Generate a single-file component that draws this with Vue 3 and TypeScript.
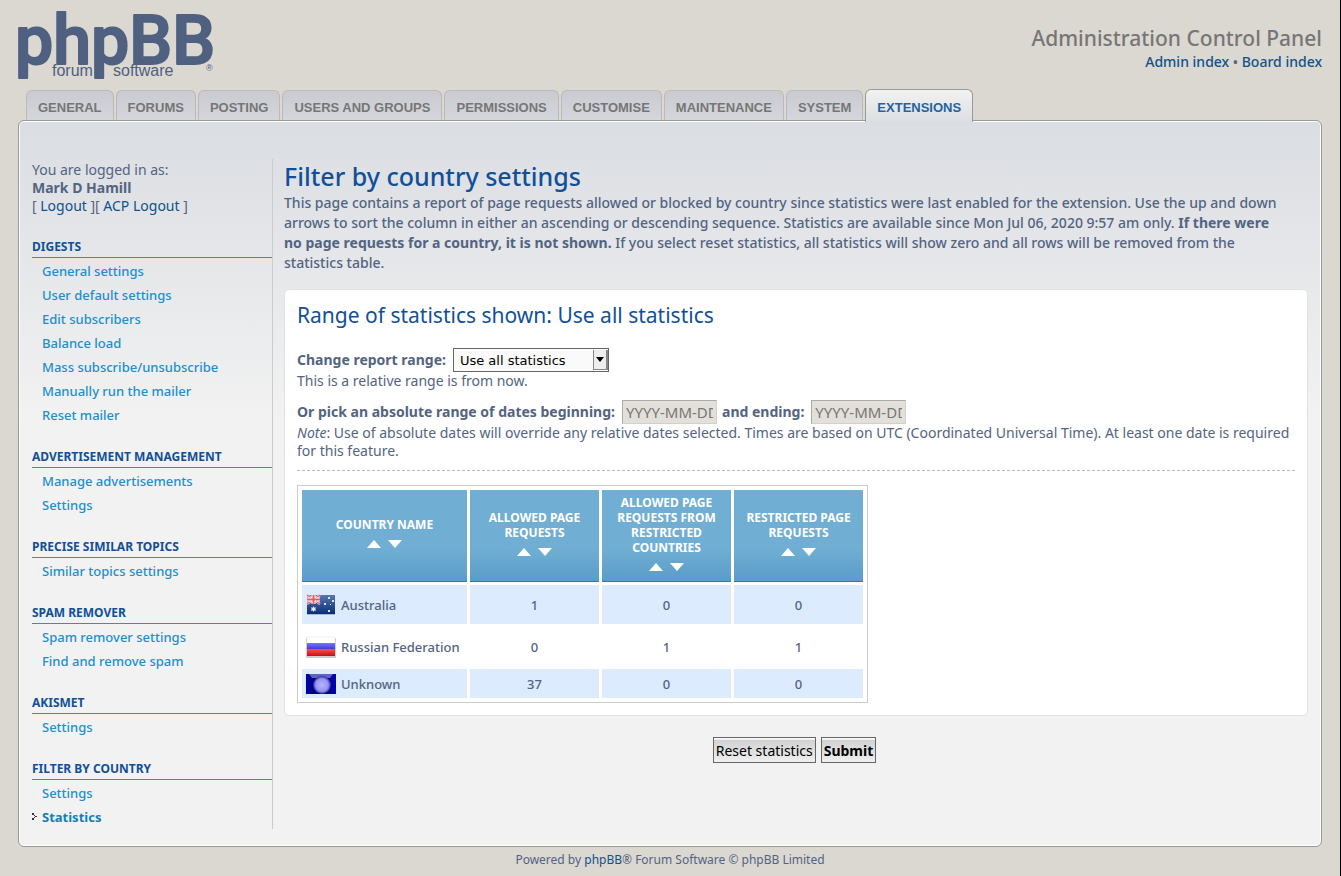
<script setup lang="ts">
import { ref } from 'vue'

interface MenuGroup {
  title: string
  items: string[]
}

interface CountryRow {
  name: string
  flag: 'au' | 'ru' | 'unknown'
  counts: number[]
}

const tabs: string[] = [
  'General', 'Forums', 'Posting', 'Users and Groups', 'Permissions',
  'Customise', 'Maintenance', 'System', 'Extensions',
]
const activeTab = 'Extensions'

const groups: MenuGroup[] = [
  {
    title: 'Digests',
    items: [
      'General settings', 'User default settings', 'Edit subscribers', 'Balance load',
      'Mass subscribe/unsubscribe', 'Manually run the mailer', 'Reset mailer',
    ],
  },
  { title: 'Advertisement management', items: ['Manage advertisements', 'Settings'] },
  { title: 'Precise Similar Topics', items: ['Similar topics settings'] },
  { title: 'Spam remover', items: ['Spam remover settings', 'Find and remove spam'] },
  { title: 'Akismet', items: ['Settings'] },
  { title: 'Filter by country', items: ['Settings', 'Statistics'] },
]

const columns: string[] = [
  'Country name',
  'Allowed page requests',
  'Allowed page requests from restricted countries',
  'Restricted page requests',
]

const rows: CountryRow[] = [
  { name: 'Australia', flag: 'au', counts: [1, 0, 0] },
  { name: 'Russian Federation', flag: 'ru', counts: [0, 1, 1] },
  { name: 'Unknown', flag: 'unknown', counts: [37, 0, 0] },
]

const range = ref('all')
const begin = ref('')
const end = ref('')
</script>

<template>
  <div class="page">
    <header class="header">
      <a href="#" class="logo" aria-label="phpBB forum software">
        <svg width="200" height="70" viewBox="0 0 200 70">
          <text class="logo-main" x="-3" y="53">phpBB</text>
          <text class="logo-sub" x="34" y="65">forum</text>
          <text class="logo-sub" x="95" y="65">software</text>
          <text class="logo-reg" x="188" y="60">®</text>
        </svg>
      </a>
      <div class="header-info">
        <h1>Administration Control Panel</h1>
        <p><a href="#">Admin index</a> • <a href="#">Board index</a></p>
      </div>
    </header>

    <nav class="tabs">
      <a v-for="tab in tabs" :key="tab" href="#" class="tab" :class="{ active: tab === activeTab }">{{ tab }}</a>
    </nav>

    <div class="panel">
      <aside class="menu">
        <div class="user">
          <div>You are logged in as:</div>
          <strong>Mark D Hamill</strong>
          <div>[ <a href="#">Logout</a> ][ <a href="#">ACP Logout</a> ]</div>
        </div>
        <section v-for="group in groups" :key="group.title" class="group">
          <h2>{{ group.title }}</h2>
          <ul>
            <li v-for="item in group.items" :key="item" :class="{ current: item === 'Statistics' }">
              <svg v-if="item === 'Statistics'" class="marker" width="5" height="7" viewBox="0 0 5 7">
                <path d="M0 0h2v2H0zM2 2h1v1H2zM3 3h2v1H3zM2 4h1v1H2zM0 5h2v2H0z" fill="#333" />
              </svg>
              <a href="#">{{ item }}</a>
            </li>
          </ul>
        </section>
      </aside>

      <main class="main">
        <h1>Filter by country settings</h1>
        <p class="intro">
          This page contains a report of page requests allowed or blocked by country since statistics were last
          enabled for the extension. Use the up and down arrows to sort the column in either an ascending or
          descending sequence. Statistics are available since Mon Jul 06, 2020 9:57 am only.
          <strong>If there were no page requests for a country, it is not shown.</strong>
          If you select reset statistics, all statistics will show zero and all rows will be removed from the
          statistics table.
        </p>

        <form @submit.prevent>
          <div class="box">
            <h2>Range of statistics shown: Use all statistics</h2>
            <div class="field">
              <label for="range">Change report range:</label>
              <span class="select-wrap">
                <select id="range" v-model="range">
                  <option value="all">Use all statistics</option>
                </select>
                <span class="select-arrow">
                  <svg width="8" height="5" viewBox="0 0 8 5"><path d="M0 0h8L4 5z" fill="#000" /></svg>
                </span>
              </span>
            </div>
            <p class="hint">This is a relative range is from now.</p>
            <div class="field dates">
              <label for="begin">Or pick an absolute range of dates beginning:</label>
              <input id="begin" v-model="begin" type="text" placeholder="YYYY-MM-DD" />
              <label for="end" class="ending">and ending:</label>
              <input id="end" v-model="end" type="text" placeholder="YYYY-MM-DD" />
            </div>
            <p class="hint">
              <em>Note</em>: Use of absolute dates will override any relative dates selected. Times are based on UTC
              (Coordinated Universal Time). At least one date is required for this feature.
            </p>
            <hr />
            <table>
              <colgroup>
                <col class="col-name" />
                <col class="col-count" />
                <col class="col-count" />
                <col class="col-count" />
              </colgroup>
              <thead>
                <tr>
                  <th v-for="column in columns" :key="column" scope="col">
                    {{ column }}
                    <span class="sort">
                      <a href="#" aria-label="Sort ascending">
                        <svg width="14" height="8" viewBox="0 0 14 8"><path d="M0 8h14L7 0z" fill="#fff" /></svg>
                      </a>
                      <a href="#" aria-label="Sort descending">
                        <svg width="14" height="8" viewBox="0 0 14 8"><path d="M0 0h14L7 8z" fill="#fff" /></svg>
                      </a>
                    </span>
                  </th>
                </tr>
              </thead>
              <tbody>
                <tr v-for="row in rows" :key="row.name" :class="row.flag">
                  <td>
                    <div class="country">
                      <svg v-if="row.flag === 'au'" width="30" height="22" viewBox="0 0 30 22">
                        <defs>
                          <linearGradient id="auBlue" x2="0" y2="1">
                            <stop offset="0" stop-color="#5577b2" />
                            <stop offset="1" stop-color="#092e78" />
                          </linearGradient>
                        </defs>
                        <rect x="1" y="2" width="28" height="19" fill="#8b98ab" opacity=".6" />
                        <rect x="1" y="1" width="28" height="19" fill="url(#auBlue)" />
                        <path d="M1 1l13 9M14 1L1 10" stroke="#eec5cd" stroke-width="2.4" />
                        <path d="M1 1l13 9M14 1L1 10" stroke="#dc5364" stroke-width="1" />
                        <path d="M7.5 1v9M1 5.5h13" stroke="#fff" stroke-width="4" />
                        <path d="M7.5 1v9M1 5.5h13" stroke="#e65c62" stroke-width="2" />
                        <path d="M7.5 12l.8 1.7 1.9-.4-.9 1.7.9 1.7-1.9-.3-.8 1.6-.8-1.6-1.9.3.9-1.7-.9-1.7 1.9.4z" fill="#dfe9fa" />
                        <g fill="#dbe6f7">
                          <rect x="22" y="3" width="2" height="2" />
                          <rect x="18" y="9" width="2" height="2" />
                          <rect x="26" y="6" width="2" height="2" />
                          <rect x="24" y="10" width="1" height="1" />
                          <rect x="22" y="16" width="2" height="2" />
                        </g>
                      </svg>
                      <svg v-else-if="row.flag === 'ru'" width="30" height="22" viewBox="0 0 30 22">
                        <defs>
                          <linearGradient id="ruRed" x2="0" y2="1">
                            <stop offset="0" stop-color="#ff5148" />
                            <stop offset="1" stop-color="#c5110c" />
                          </linearGradient>
                          <linearGradient id="ruBlue" x2="0" y2="1">
                            <stop offset="0" stop-color="#7775ff" />
                            <stop offset="1" stop-color="#3830d8" />
                          </linearGradient>
                        </defs>
                        <rect x="0" y="2" width="30" height="20" rx="1" fill="#b5b5b5" opacity=".7" />
                        <rect x="1" y="1" width="28" height="19" fill="#fff" stroke="#ddd" stroke-width=".5" />
                        <rect x="1" y="7" width="28" height="7" fill="url(#ruBlue)" />
                        <rect x="1" y="13" width="28" height="7" fill="url(#ruRed)" />
                      </svg>
                      <svg v-else width="30" height="20" viewBox="0 0 30 20">
                        <defs>
                          <radialGradient id="globe">
                            <stop offset="0" stop-color="#b5b5ff" />
                            <stop offset=".7" stop-color="#9494ef" />
                            <stop offset="1" stop-color="#2020b0" />
                          </radialGradient>
                          <linearGradient id="night">
                            <stop offset="0" stop-color="#0000b8" />
                            <stop offset=".25" stop-color="#000078" />
                            <stop offset=".7" stop-color="#000078" />
                            <stop offset="1" stop-color="#0000b8" />
                          </linearGradient>
                        </defs>
                        <rect width="30" height="20" fill="url(#night)" />
                        <path d="M3 0h24l-3 4H6z" fill="#6262bd" />
                        <circle cx="16" cy="11" r="9" fill="url(#globe)" />
                      </svg>
                      <span>{{ row.name }}</span>
                    </div>
                  </td>
                  <td v-for="(count, i) in row.counts" :key="i" class="count">{{ count }}</td>
                </tr>
              </tbody>
            </table>
          </div>
          <div class="actions">
            <button type="button">Reset statistics</button>
            <button type="submit" class="primary">Submit</button>
          </div>
        </form>
      </main>
    </div>

    <footer class="footer">Powered by <a href="#">phpBB</a>® Forum Software © phpBB Limited</footer>
  </div>
</template>

<style>
body {
  background: #dbd7d1;
}
</style>

<style scoped>
* {
  box-sizing: border-box;
}

h1,
h2,
p,
ul {
  margin: 0;
  padding: 0;
  font-weight: 400;
}

a {
  color: #105289;
  text-decoration: none;
}

.page {
  min-height: 100vh;
  padding: 0 18px;
  border-right: 1px solid #000;
  color: #536482;
  font: 14px/18px "Noto Sans", "Open Sans", sans-serif;
}

.header {
  display: flex;
  justify-content: space-between;
  height: 89px;
  padding-top: 11px;
}

.logo svg {
  display: block;
  overflow: visible;
  fill: #4f6080;
}

.logo-main {
  font: 500 68px Roboto, sans-serif;
  stroke: #4f6080;
  stroke-width: 2px;
  stroke-linejoin: round;
}

.logo-sub {
  font: 16px "Liberation Sans", sans-serif;
}

.logo-reg {
  font: 9px "Liberation Sans", sans-serif;
}

.header-info {
  padding-top: 12px;
  text-align: right;
}

.header-info h1 {
  color: #767676;
  font: 500 21px/30px "Noto Sans", "Open Sans", sans-serif;
}

.header-info p {
  font-weight: 500;
}

.tabs {
  display: flex;
  align-items: flex-end;
  gap: 2px;
  height: 32px;
  padding-left: 8px;
}

.tab {
  height: 30px;
  margin-bottom: 1px;
  padding: 0 11px;
  border: 1px solid #bbb9b9;
  border-bottom: 0;
  border-radius: 6px 6px 0 0;
  background: linear-gradient(#c9cbd0, #d4d6db);
  color: #767676;
  font: bold 13px/34px "Liberation Sans", Arial, sans-serif;
  text-transform: uppercase;
}

.tab.active {
  z-index: 1;
  height: 33px;
  margin-bottom: -1px;
  border-color: #999;
  background: linear-gradient(#f2f2f2, #dcdee2);
  color: #23649f;
  line-height: 36px;
}

.panel {
  display: flex;
  margin-top: -1px;
  padding: 38px 12px 17px;
  border: 1px solid #999;
  border-radius: 6px;
  background: linear-gradient(#dadde2, #f2f2f2 300px);
  box-shadow: inset 0 0 0 1px #fff;
}

.menu {
  flex: 0 0 241px;
  margin-left: 1px;
  border-right: 1px solid #ccc;
}

.user {
  padding: 2px 0 21px;
}

.user strong {
  display: block;
}

.group {
  padding-bottom: 19px;
}

.group:last-child {
  padding-bottom: 0;
}

.group h2 {
  padding: 2px 0 1px;
  border-bottom: 1px solid #3b8bbd;
  color: #115098;
  font: bold 12px/18px "Noto Sans", sans-serif;
  text-transform: uppercase;
}

.group ul {
  padding-top: 1px;
  list-style: none;
}

.group li {
  position: relative;
  padding-left: 10px;
  font-size: 13px;
  font-weight: 500;
  line-height: 24px;
}

.group li a {
  color: #1d8fcb;
}

.group .current a {
  color: #1180b5;
  font-weight: bold;
}

.marker {
  position: absolute;
  top: 8px;
  left: 0;
}

.main {
  flex: 1;
  min-width: 0;
  margin-left: 11px;
}

.main h1 {
  color: #115098;
  font: 500 25px/34px "Noto Sans", "Open Sans", sans-serif;
}

.intro {
  padding-right: 20px;
  font-weight: 500;
  line-height: 20px;
}

.box {
  margin: 16px 1px 0 0;
  padding: 12px;
  border: 1px solid #e0e2e5;
  border-radius: 5px;
  background: #fff;
}

.box h2 {
  margin-bottom: 20px;
  color: #115098;
  font: 21px/26px "Noto Sans", "Open Sans", sans-serif;
}

.field {
  display: flex;
  align-items: center;
  height: 24px;
}

.field label {
  margin-right: 7px;
  font-weight: bold;
}

.field .ending {
  margin-left: 5px;
}

.dates {
  margin-top: 10px;
}

.select-wrap {
  position: relative;
  display: flex;
}

select {
  appearance: none;
  width: 156px;
  height: 24px;
  padding: 0 20px 0 6px;
  border: 1px solid #666;
  border-radius: 0;
  background: #fafafa;
  color: #000;
  font: 13px "DejaVu Sans", Verdana, sans-serif;
}

.select-arrow {
  position: absolute;
  top: 2px;
  right: 1px;
  display: flex;
  align-items: center;
  justify-content: center;
  width: 15px;
  height: 20px;
  border: solid #888;
  border-width: 0 2px 1px 1px;
  background: #eee;
  pointer-events: none;
}

input {
  width: 95px;
  height: 24px;
  padding: 1px 3px;
  border: 1px solid #d5d0c5;
  border-top-color: #aaa;
  border-left-color: #aaa;
  border-radius: 0;
  background: #e3dfda;
  color: #333;
  font: 15px "Noto Sans", sans-serif;
}

input::placeholder {
  color: #777;
}

hr {
  margin: 10px 0 14px;
  border: 0;
  border-top: 1px dashed #bbb;
}

table {
  width: 571px;
  padding: 1px;
  border: 1px solid #ccc;
  border-spacing: 3px;
  table-layout: fixed;
}

.col-name {
  width: 165px;
}

th {
  height: 92px;
  padding: 4px 8px;
  border-bottom: 1px solid #2f7cab;
  background: linear-gradient(#70aed3 65%, #5a9dc8);
  color: #fff;
  font: bold 12px/15px "Noto Sans", sans-serif;
  text-transform: uppercase;
  vertical-align: middle;
}

.sort {
  display: flex;
  justify-content: center;
  gap: 7px;
  padding: 8px 0 6px;
}

.sort svg {
  display: block;
}

td {
  padding: 0 0 0 4px;
  font-size: 13px;
  font-weight: 500;
}

.au,
.ru {
  height: 39px;
}

.unknown {
  height: 29px;
}

.au td,
.unknown td {
  background: #dcebfe;
}

.country {
  display: flex;
  align-items: center;
  gap: 5px;
  white-space: nowrap;
}

.count {
  padding: 0;
  text-align: center;
}

.actions {
  display: flex;
  justify-content: center;
  gap: 5px;
  padding: 21px 4px 0 0;
}

button {
  height: 26px;
  padding: 0 2px;
  border: 1px solid #666;
  border-radius: 0;
  background: linear-gradient(#fafafa 5%, #d2d2d2 10%, #efefef);
  color: #000;
  font: 14px "Noto Sans", sans-serif;
}

.primary {
  font-weight: bold;
}

.footer {
  padding-top: 4px;
  font-size: 12px;
  text-align: center;
}
</style>
